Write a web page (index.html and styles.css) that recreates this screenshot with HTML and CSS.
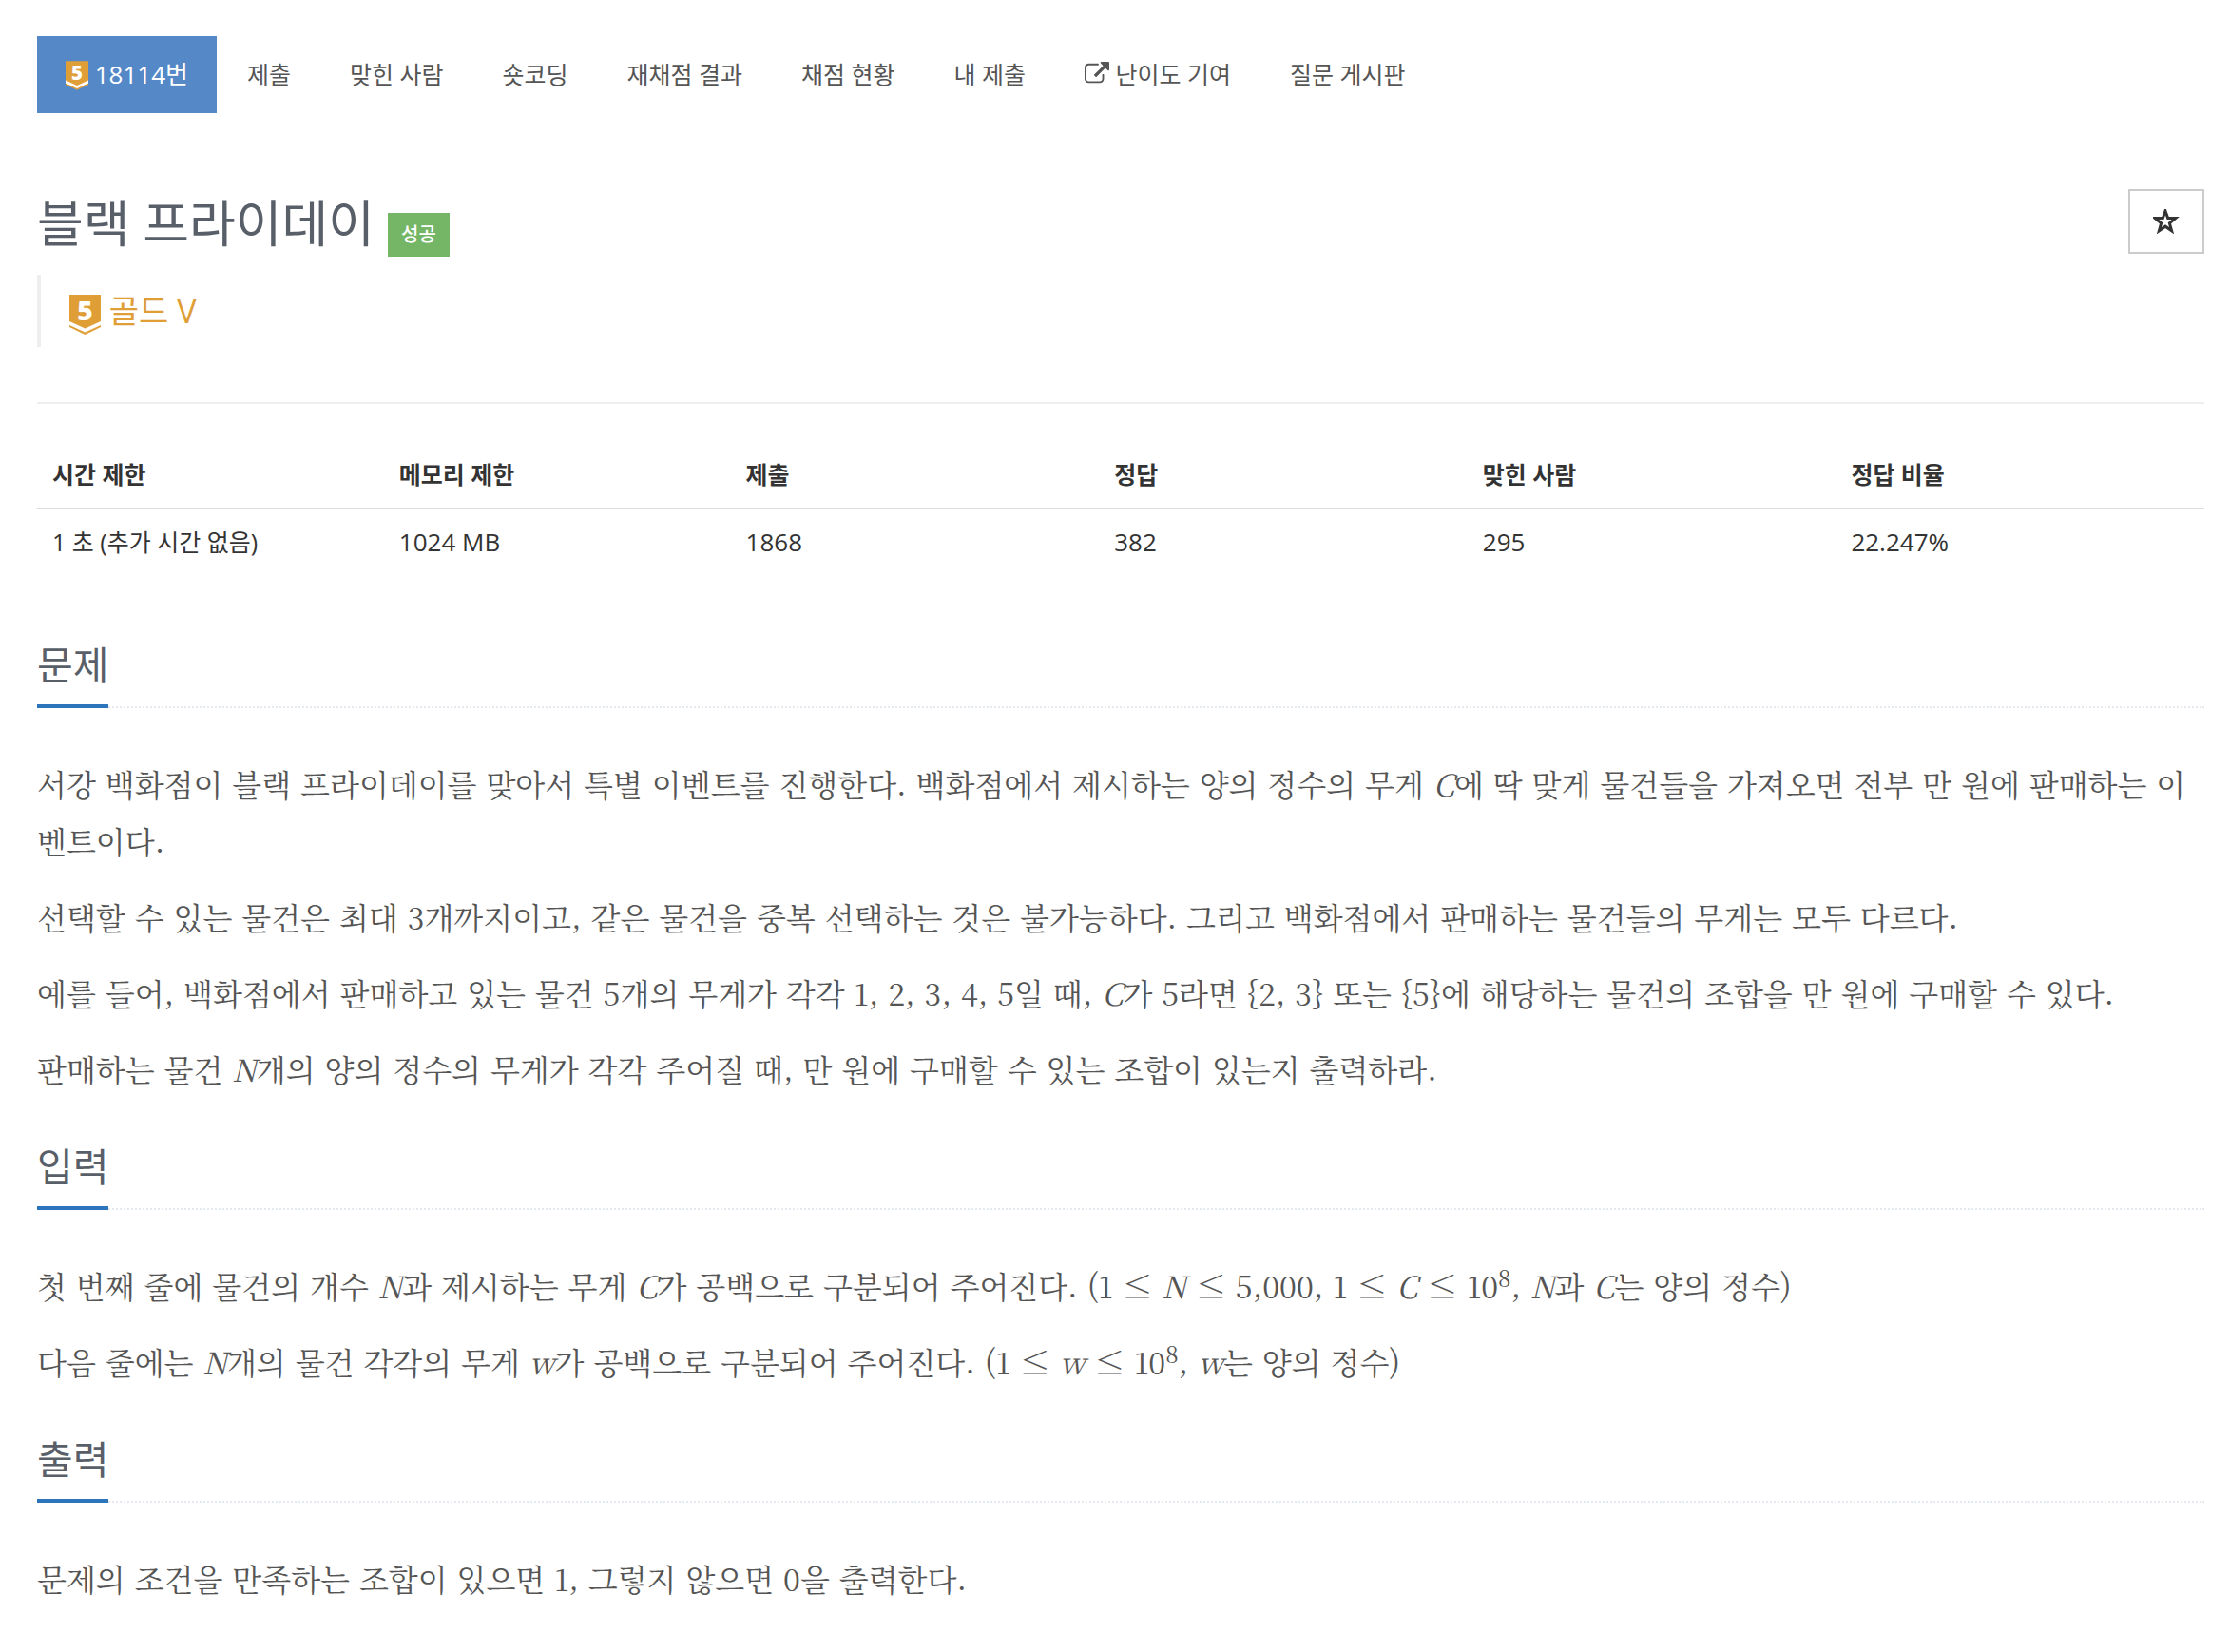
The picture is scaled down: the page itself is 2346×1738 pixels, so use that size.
FILE: index.html
```html
<!DOCTYPE html>
<html lang="ko">
<head>
  <meta charset="UTF-8">
  <meta name="viewport" content="width=device-width, initial-scale=1.0">
  <title>18114번: 블랙 프라이데이</title>
  <link rel="stylesheet" href="styles.css">
</head>
<body>

  <div class="container">
    <nav class="problem-menu">
      <a class="active" href="#">
        <svg class="tier" viewBox="0 0 33 42" aria-hidden="true">
          <path fill="#e09e37" d="M0 0h33v34l-16.500 8L0 34z"/>
          <path fill="#fff" d="M0 28l16.500 7.500L33 28v4l-16.500 7.500L0 32z"/>
          <text x="16.500" y="27">5</text>
        </svg>
        18114번</a>
      <a href="#">제출</a>
      <a href="#">맞힌 사람</a>
      <a href="#">숏코딩</a>
      <a href="#">재채점 결과</a>
      <a href="#">채점 현황</a>
      <a href="#">내 제출</a>
      <a href="#">
        <svg class="external" viewBox="0 0 1792 1792" aria-hidden="true">
          <path d="M1408 928v320q0 119-84.500 203.500T1120 1536H288q-119 0-203.500-84.500T0 1248V416q0-119 84.500-203.500T288 128h704q14 0 23 9t9 23v64q0 14-9 23t-23 9H288q-66 0-113 47t-47 113v832q0 66 47 113t113 47h832q66 0 113-47t47-113V928q0-14 9-23t23-9h64q14 0 23 9t9 23zm384-864v512q0 26-19 45t-45 19-45-19l-176-176-652 652q-10 10-23 10t-23-10L695 983q-10-10-10-23t10-23l652-652-176-176q-19-19-19-45t19-45 45-19h512q26 0 45 19t19 45z"/>
        </svg>
        난이도 기여</a>
      <a href="#">질문 게시판</a>
    </nav>

    <header class="page-header">
      <div class="title-row">
        <h1>블랙 프라이데이</h1>
        <span class="label">성공</span>
        <button class="favorite" type="button" aria-label="즐겨찾기">
          <svg viewBox="0 0 28 26" aria-hidden="true">
            <path d="M13 2l2.700 7.600h8l-6.300 5.200 2.200 8L13 18.200l-6.600 4.600 2.200-8-6.300-5.200h8z"/>
          </svg>
        </button>
      </div>
      <blockquote class="level">
        <svg class="tier" viewBox="0 0 33 42" aria-hidden="true">
          <path fill="#e09e37" d="M0 0h33v34l-16.500 8L0 34z"/>
          <path fill="#fff" d="M0 28l16.500 7.500L33 28v4l-16.500 7.500L0 32z"/>
          <text x="16.500" y="27">5</text>
        </svg>
        골드 V
      </blockquote>
    </header>

    <table class="info">
      <thead>
        <tr>
          <th class="limit">시간 제한</th>
          <th class="limit">메모리 제한</th>
          <th>제출</th>
          <th>정답</th>
          <th>맞힌 사람</th>
          <th>정답 비율</th>
        </tr>
      </thead>
      <tbody>
        <tr>
          <td>1 초 (추가 시간 없음)</td>
          <td class="num">1024 MB</td>
          <td class="num">1868</td>
          <td class="num">382</td>
          <td class="num">295</td>
          <td class="num">22.247%</td>
        </tr>
      </tbody>
    </table>

    <section>
      <div class="headline"><h2>문제</h2></div>
      <p>서강 백화점이 블랙 프라이데이를 맞아서 특별 이벤트를 진행한다. 백화점에서 제시하는 양의 정수의 무게 <em>C</em>에 딱 맞게 물건들을 가져오면 전부 만 원에 판매하는 이벤트이다.</p>
      <p>선택할 수 있는 물건은 최대 3개까지이고, 같은 물건을 중복 선택하는 것은 불가능하다. 그리고 백화점에서 판매하는 물건들의 무게는 모두 다르다.</p>
      <p>예를 들어, 백화점에서 판매하고 있는 물건 5개의 무게가 각각 1, 2, 3, 4, 5일 때, <em>C</em>가 5라면 {2, 3} 또는 {5}에 해당하는 물건의 조합을 만 원에 구매할 수 있다.</p>
      <p>판매하는 물건 <em>N</em>개의 양의 정수의 무게가 각각 주어질 때, 만 원에 구매할 수 있는 조합이 있는지 출력하라.</p>
    </section>

    <section>
      <div class="headline"><h2>입력</h2></div>
      <p>첫 번째 줄에 물건의 개수 <em>N</em>과 제시하는 무게 <em>C</em>가 공백으로 구분되어 주어진다. (1 ≤ <em>N</em> ≤ 5,000, 1 ≤ <em>C</em> ≤ 10<sup>8</sup>, <em>N</em>과 <em>C</em>는 양의 정수)</p>
      <p>다음 줄에는 <em>N</em>개의 물건 각각의 무게 <em>w</em>가 공백으로 구분되어 주어진다. (1 ≤ <em>w</em> ≤ 10<sup>8</sup>, <em>w</em>는 양의 정수)</p>
    </section>

    <section>
      <div class="headline"><h2>출력</h2></div>
      <p>문제의 조건을 만족하는 조합이 있으면 1, 그렇지 않으면 0을 출력한다.</p>
    </section>
  </div>

</body>
</html>
```
FILE: styles.css
```css
* {
  box-sizing: border-box;
}

body {
  margin: 0;
  background-color: #fff;
  color: #333;
  font-family: "Open Sans", "Noto Sans CJK KR", sans-serif;
  font-size: 25px;
  line-height: 37px;
}

.container {
  padding: 38px 27px 60px 39px;
}

.problem-menu {
  display: flex;
  gap: 2px;
}

.problem-menu a {
  padding: 20px 30px;
  color: #555;
  line-height: 41px;
  text-decoration: none;
}

.problem-menu a.active {
  background-color: #5488c7;
  color: #fff;
  font-size: 26px;
}

.tier {
  width: 24px;
  height: 31px;
  overflow: visible;
  vertical-align: -7px;
}

.tier text {
  fill: #fff;
  font-size: 28px;
  font-weight: 800;
  line-height: 28px;
  text-anchor: middle;
}

.external {
  width: 26px;
  height: 26px;
  fill: #555;
  vertical-align: -3px;
}

.page-header {
  margin-top: 80px;
  padding-bottom: 58px;
  border-bottom: 2px solid #eee;
}

.title-row {
  display: flex;
  align-items: flex-start;
}

h1 {
  margin: 0;
  color: #585f69;
  font-size: 53px;
  font-weight: 400;
  line-height: 72px;
}

.label {
  margin: 25px 0 0 14px;
  padding: 0 14px;
  background-color: #74b566;
  color: #fff;
  font-size: 20px;
  font-weight: 500;
  line-height: 46px;
}

.favorite {
  display: flex;
  align-items: center;
  justify-content: center;
  width: 80px;
  height: 68px;
  margin-left: auto;
  border: 2px solid #ccc;
  background-color: #fff;
  cursor: pointer;
}

.favorite svg {
  width: 28px;
  height: 26px;
  fill: none;
  stroke: #333;
  stroke-width: 3;
}

.level {
  margin: 18px 0 0;
  padding: 0 30px;
  border-left: 4px solid #eee;
  color: #e09e37;
  font-size: 34px;
  line-height: 76px;
}

.level .tier {
  width: 33px;
  height: 42px;
  vertical-align: -12px;
}

.info {
  width: 100%;
  margin-top: 40px;
  margin-bottom: 64px;
  border-collapse: collapse;
  table-layout: fixed;
}

.info th,
.info td {
  padding: 16px;
  text-align: left;
}

.info th {
  width: 17%;
  border-bottom: 2px solid #ddd;
}

.info th.limit {
  width: 16%;
}

.info td.num {
  font-size: 26px;
}

.headline {
  margin: 43px 0 49px;
  border-bottom: 2px dotted #e4e9f0;
}

h2 {
  display: inline-block;
  margin: 0 0 -2px;
  padding-bottom: 12px;
  border-bottom: 4px solid #2c74bc;
  color: #585f69;
  font-size: 41px;
  font-weight: 400;
  line-height: 60px;
}

p {
  margin: 0 0 20px;
  color: #555;
  font-family: "Noto Serif CJK KR", "Noto Serif KR", "Noto Sans CJK KR", serif;
  font-size: 32px;
  line-height: 60px;
  word-break: break-all;
}

sup {
  font-size: 24px;
  line-height: 0;
}
```
